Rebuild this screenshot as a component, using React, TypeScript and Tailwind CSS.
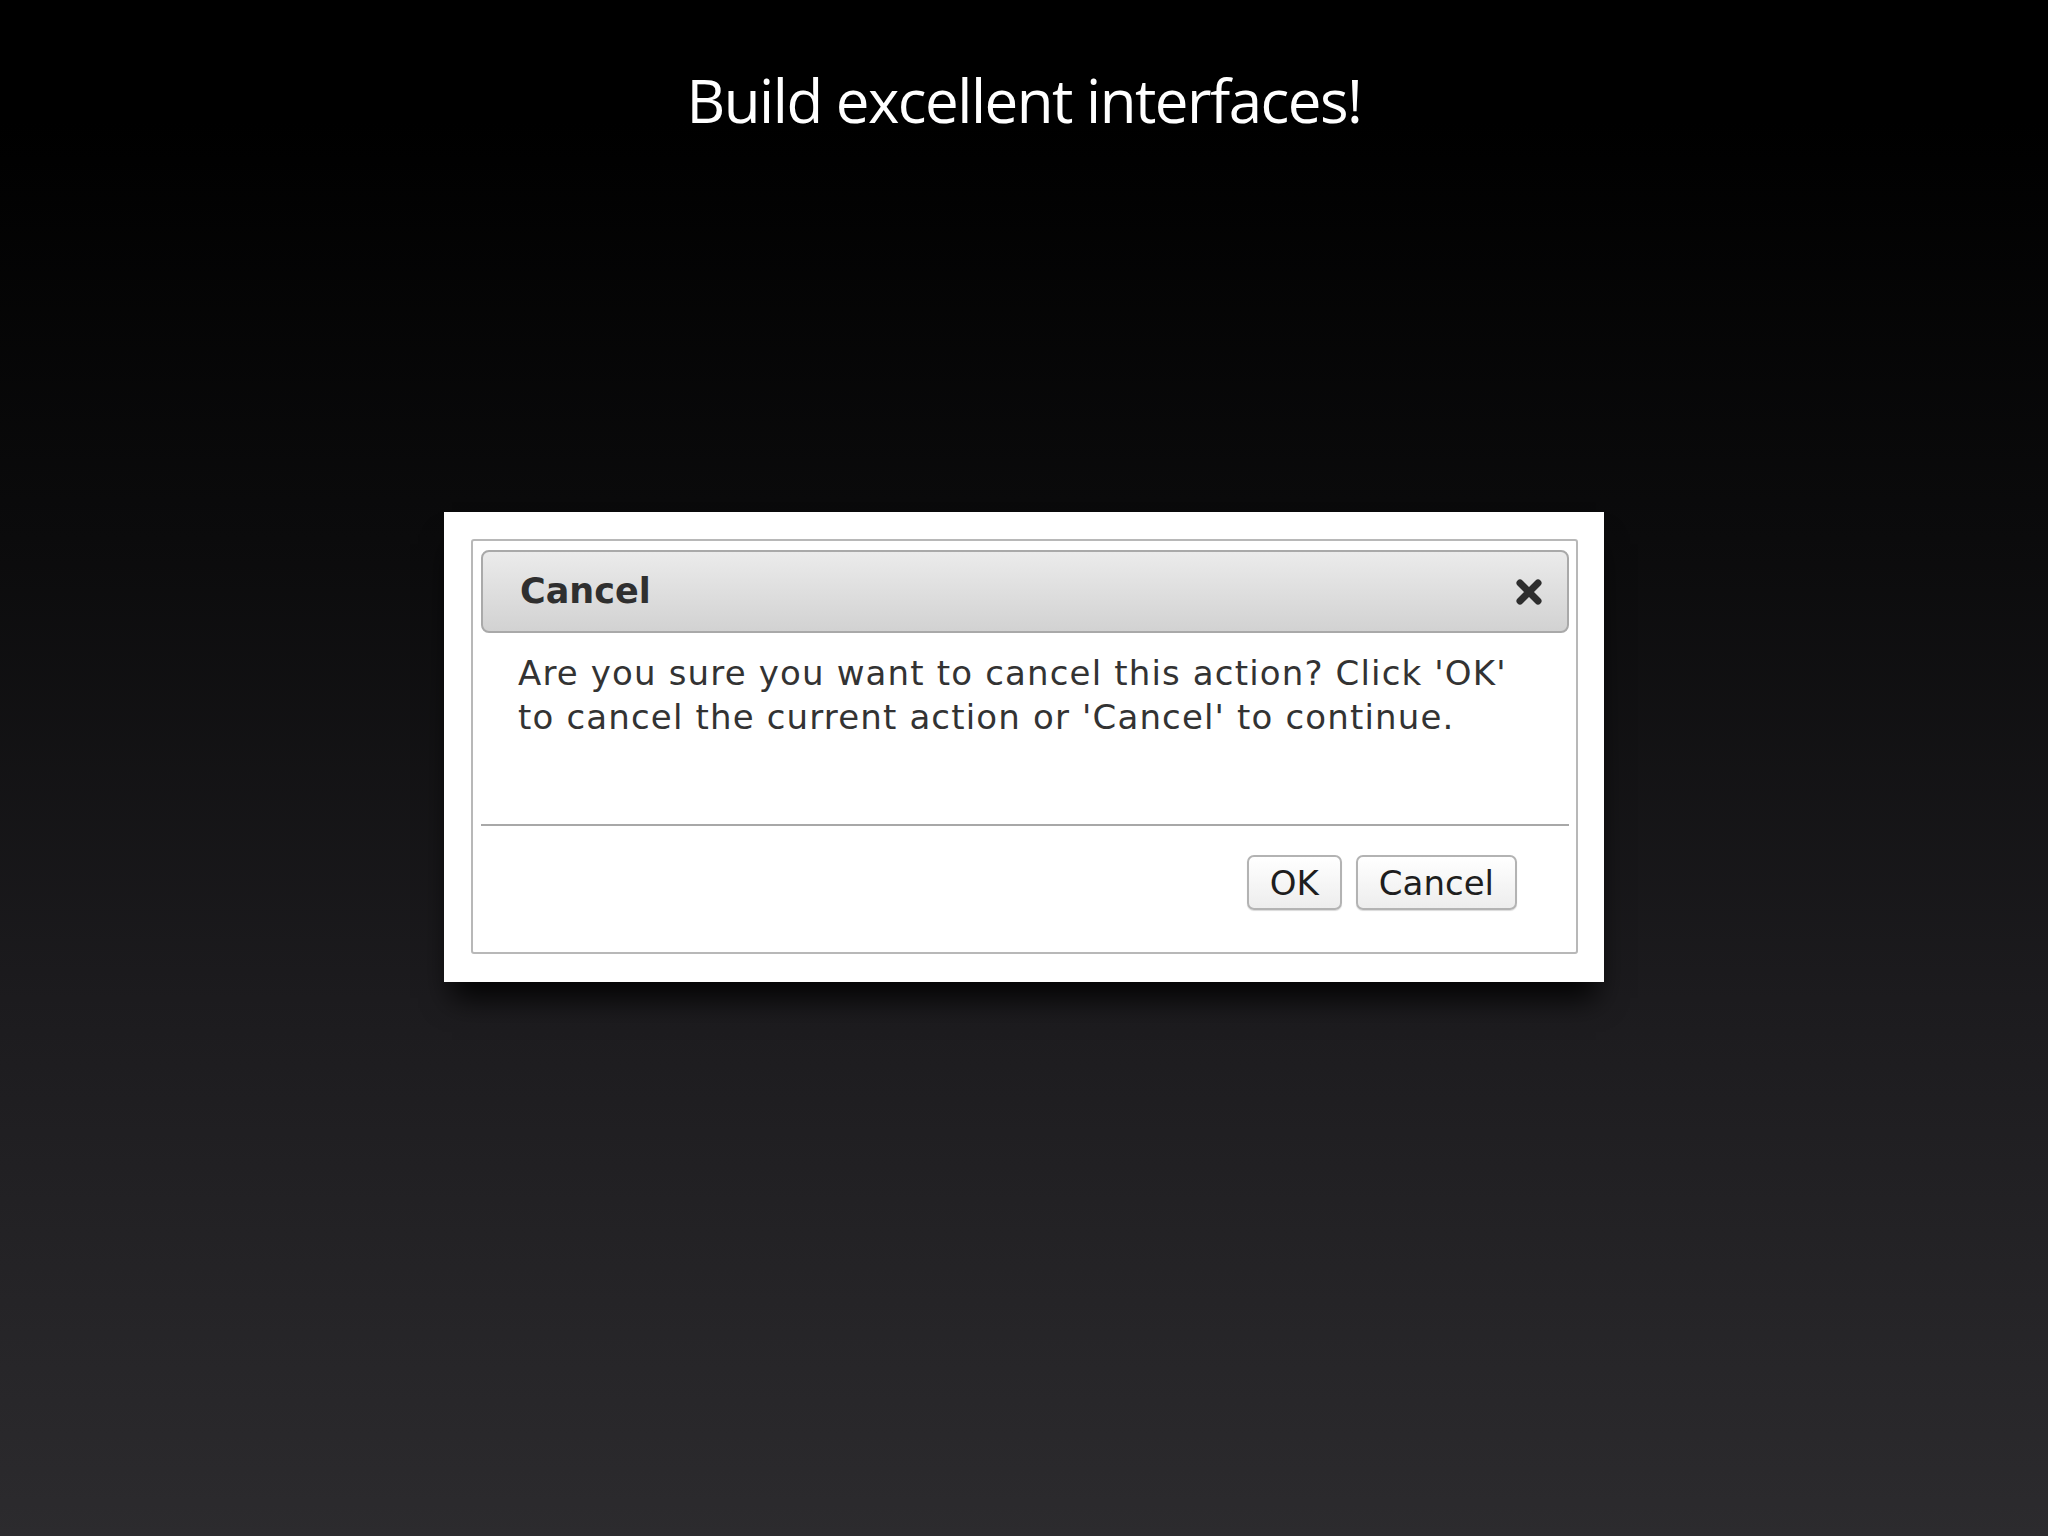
import React from 'react';

const CloseIcon = () => (
  <svg width="28" height="26" viewBox="0 0 28 26" fill="none">
    <path d="M5 4 L23 22 M23 4 L5 22" stroke="#2e2e2e" strokeWidth="7" strokeLinecap="round" />
  </svg>
);

const DialogButton = ({ label }: { label: string }) => (
  <button
    type="button"
    className="h-[55px] px-[21px] rounded-[7px] border-2 border-[#b3b3b3] bg-[linear-gradient(to_bottom,#ffffff,#ededed)] text-[34px] leading-none text-[#1e1e1e] font-['DejaVu_Sans',sans-serif] shadow-[0_1px_1px_rgba(0,0,0,0.15)]"
  >
    {label}
  </button>
);

export default function App() {
  return (
    <div className="min-h-[1536px] w-full bg-[linear-gradient(to_bottom,#000000_8%,#0b0b0c_35%,#1c1b1e_65%,#2c2b2e_100%)] flex flex-col items-center">
      <h1 className="pt-[70px] text-[60px] leading-none tracking-[-0.025em] text-white font-['Open_Sans',sans-serif]">
        Build excellent interfaces!
      </h1>

      <div className="mt-[382px] w-[1160px] h-[470px] bg-white pt-[27px] pl-[27px] pr-[26px] pb-[28px] shadow-[0_24px_28px_-8px_rgba(0,0,0,0.9)]">
        <div className="h-full flex flex-col border-2 border-[#b8b8b8] rounded-[3px] bg-white pt-[9px] pl-[8px] pr-[7px]">
          <div className="h-[83px] shrink-0 flex items-center justify-between pl-[37px] pr-[24px] rounded-[8px] border-2 border-[#a9a9a9] bg-[linear-gradient(to_bottom,#ebebeb,#d2d2d2)]">
            <span className="text-[35px] font-bold leading-none text-[#2f2f2f] font-['DejaVu_Sans',sans-serif]">
              Cancel
            </span>
            <CloseIcon />
          </div>

          <div className="h-[191px] shrink-0 pt-[18px] pl-[37px] text-[34px] leading-[44px] tracking-[0.034em] text-[#333333] font-['DejaVu_Sans',sans-serif]">
            <p>Are you sure you want to cancel this action? Click 'OK'</p>
            <p>to cancel the current action or 'Cancel' to continue.</p>
          </div>

          <div className="h-[2px] shrink-0 bg-[#a8a8a8]" />

          <div className="flex justify-end gap-[14px] pt-[29px] pr-[52px]">
            <DialogButton label="OK" />
            <DialogButton label="Cancel" />
          </div>
        </div>
      </div>
    </div>
  );
}
